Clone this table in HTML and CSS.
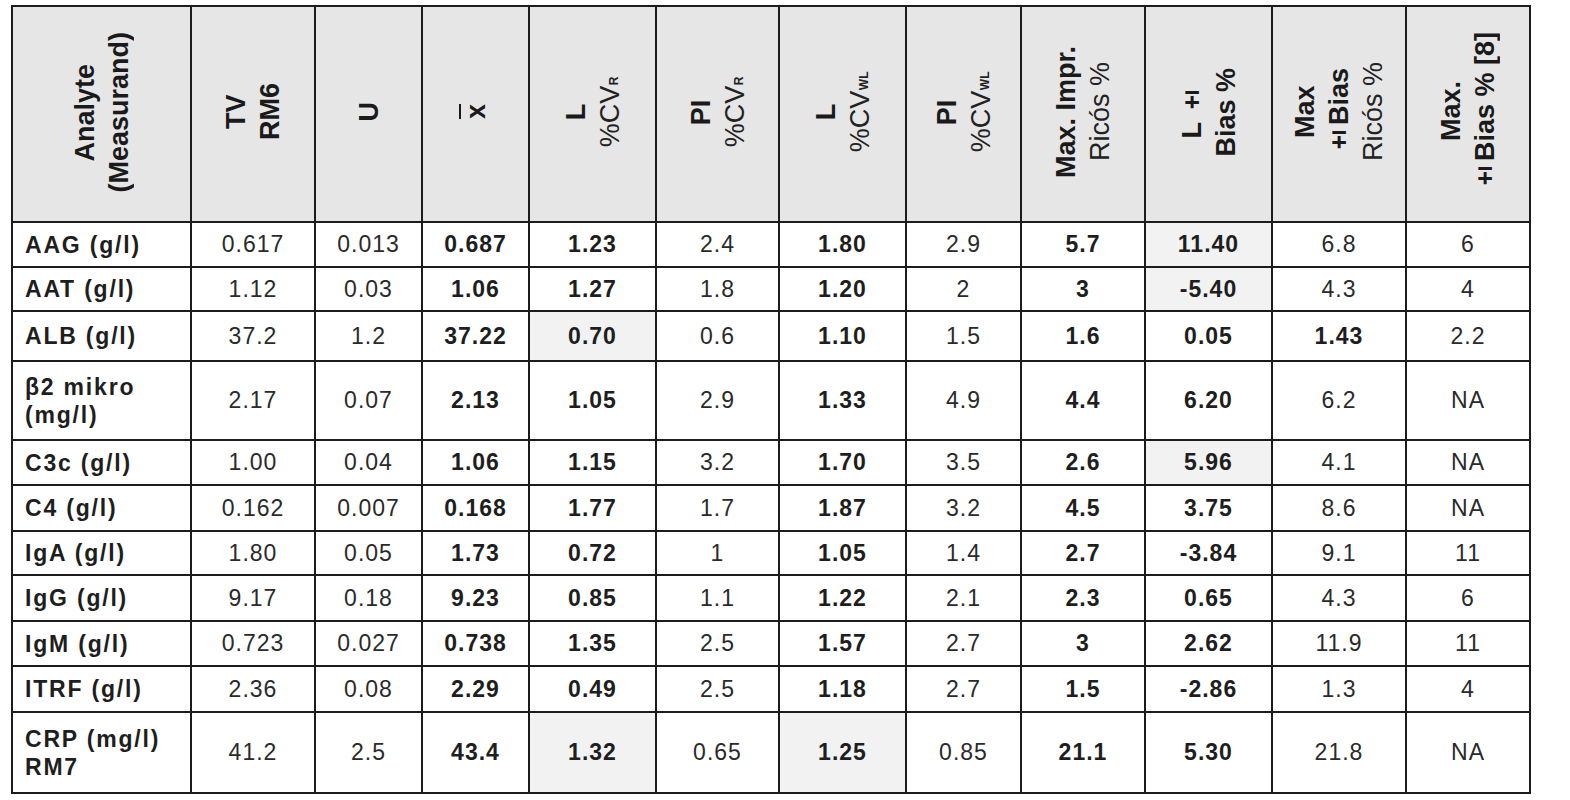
FILE: index.html
```html
<!DOCTYPE html>
<html>
<head>
<meta charset="utf-8">
<link rel="stylesheet" href="styles.css">
</head>
<body>
<table class="grid">
  <colgroup>
    <col class="c-name"><col class="c-tv"><col class="c-u"><col class="c-x"><col class="c-lr"><col class="c-pr"><col class="c-lw"><col class="c-pw"><col class="c-mi"><col class="c-lb"><col class="c-mb"><col class="c-m8">
  </colgroup>
  <thead>
    <tr class="r-head">
      <th><div class="rot"><b>Analyte</b><br><b>(Measurand)</b></div></th>
      <th><div class="rot"><b>TV</b><br><b>RM6</b></div></th>
      <th><div class="rot"><b>U</b></div></th>
      <th><div class="rot"><b class="bar">x</b></div></th>
      <th><div class="rot"><b>L</b><br><span class="cv">%CV<sub>R</sub></span></div></th>
      <th><div class="rot"><b>PI</b><br><span class="cv">%CV<sub>R</sub></span></div></th>
      <th><div class="rot"><b>L</b><br><span class="cv">%CV<sub>WL</sub></span></div></th>
      <th><div class="rot"><b>PI</b><br><span class="cv">%CV<sub>WL</sub></span></div></th>
      <th><div class="rot"><b>Max. Impr.</b><br><span class="cv">Ricós %</span></div></th>
      <th><div class="rot"><b>L ±</b><br><b>Bias %</b></div></th>
      <th><div class="rot"><b>Max</b><br><b>±Bias</b><br><span class="cv">Ricós %</span></div></th>
      <th><div class="rot"><b>Max.</b><br><b>±Bias % [8]</b></div></th>
    </tr>
  </thead>
  <tbody>
    <tr class="r45"><td class="name">AAG (g/l)</td><td>0.617</td><td>0.013</td><td class="b">0.687</td><td class="b">1.23</td><td>2.4</td><td class="b">1.80</td><td>2.9</td><td class="b">5.7</td><td class="b s">11.40</td><td>6.8</td><td>6</td></tr>
    <tr class="r44"><td class="name">AAT (g/l)</td><td>1.12</td><td>0.03</td><td class="b">1.06</td><td class="b">1.27</td><td>1.8</td><td class="b">1.20</td><td>2</td><td class="b">3</td><td class="b s">-5.40</td><td>4.3</td><td>4</td></tr>
    <tr class="r50"><td class="name">ALB (g/l)</td><td>37.2</td><td>1.2</td><td class="b">37.22</td><td class="b s">0.70</td><td>0.6</td><td class="b">1.10</td><td>1.5</td><td class="b">1.6</td><td class="b">0.05</td><td class="b">1.43</td><td>2.2</td></tr>
    <tr class="r79"><td class="name">β2 mikro<br>(mg/l)</td><td>2.17</td><td>0.07</td><td class="b">2.13</td><td class="b">1.05</td><td>2.9</td><td class="b">1.33</td><td>4.9</td><td class="b">4.4</td><td class="b">6.20</td><td>6.2</td><td>NA</td></tr>
    <tr class="r45"><td class="name">C3c (g/l)</td><td>1.00</td><td>0.04</td><td class="b">1.06</td><td class="b">1.15</td><td>3.2</td><td class="b">1.70</td><td>3.5</td><td class="b">2.6</td><td class="b s">5.96</td><td>4.1</td><td>NA</td></tr>
    <tr class="r46"><td class="name">C4 (g/l)</td><td>0.162</td><td>0.007</td><td class="b">0.168</td><td class="b">1.77</td><td>1.7</td><td class="b">1.87</td><td>3.2</td><td class="b">4.5</td><td class="b">3.75</td><td>8.6</td><td>NA</td></tr>
    <tr class="r44"><td class="name">IgA (g/l)</td><td>1.80</td><td>0.05</td><td class="b">1.73</td><td class="b">0.72</td><td>1</td><td class="b">1.05</td><td>1.4</td><td class="b">2.7</td><td class="b">-3.84</td><td>9.1</td><td>11</td></tr>
    <tr class="r46"><td class="name">IgG (g/l)</td><td>9.17</td><td>0.18</td><td class="b">9.23</td><td class="b">0.85</td><td>1.1</td><td class="b">1.22</td><td>2.1</td><td class="b">2.3</td><td class="b">0.65</td><td>4.3</td><td>6</td></tr>
    <tr class="r45"><td class="name">IgM (g/l)</td><td>0.723</td><td>0.027</td><td class="b">0.738</td><td class="b">1.35</td><td>2.5</td><td class="b">1.57</td><td>2.7</td><td class="b">3</td><td class="b">2.62</td><td>11.9</td><td>11</td></tr>
    <tr class="r46"><td class="name">ITRF (g/l)</td><td>2.36</td><td>0.08</td><td class="b">2.29</td><td class="b">0.49</td><td>2.5</td><td class="b">1.18</td><td>2.7</td><td class="b">1.5</td><td class="b">-2.86</td><td>1.3</td><td>4</td></tr>
    <tr class="r81"><td class="name">CRP (mg/l)<br>RM7</td><td>41.2</td><td>2.5</td><td class="b">43.4</td><td class="b s">1.32</td><td>0.65</td><td class="b s">1.25</td><td>0.85</td><td class="b">21.1</td><td class="b">5.30</td><td>21.8</td><td>NA</td></tr>
  </tbody>
</table>
</body>
</html>
```
FILE: styles.css
```css
html, body {
  margin: 0;
  padding: 0;
  background: #ffffff;
}
body {
  padding: 5px 0 0 11px;
  font-family: "Liberation Sans", Arial, sans-serif;
  color: #2a2a2a;
}
.grid {
  border-collapse: collapse;
  table-layout: fixed;
  width: 1520px;
  border: 2.5px solid #1c1c1c;
}
.c-name { width: 179px; }
.c-tv { width: 124px; }
.c-u { width: 107px; }
.c-x { width: 107px; }
.c-lr { width: 127px; }
.c-pr { width: 123px; }
.c-lw { width: 127px; }
.c-pw { width: 115px; }
.c-mi { width: 124px; }
.c-lb { width: 127px; }
.c-mb { width: 134px; }
.c-m8 { width: 124px; }

.grid th, .grid td {
  border: 2px solid #1c1c1c;
  padding: 0;
  text-align: center;
  vertical-align: middle;
}
.grid th {
  background: #e6e6e6;
  color: #1a1a1a;
  font-weight: normal;
}
.r-head { height: 216px; }
.r44 { height: 44px; }
.r45 { height: 45px; }
.r46 { height: 46px; }
.r50 { height: 50px; }
.r79 { height: 79px; }
.r81 { height: 81px; }

.rot {
  display: inline-block;
  writing-mode: vertical-rl;
  transform: rotate(180deg);
  text-align: center;
  font-size: 27px;
  line-height: 34px;
  white-space: nowrap;
}
.rot b { font-weight: bold; }
.rot .cv { font-weight: normal; color: #222222; }
.rot sub {
  font-size: 12px;
  font-weight: bold;
  vertical-align: -4px;
  line-height: 0;
  margin-left: 1px;
}
.bar {
  text-decoration: overline;
  text-decoration-thickness: 2px;
}

.grid td {
  font-size: 23px;
  letter-spacing: 1px;
  color: #2a2a2a;
}
.grid td.b {
  font-weight: bold;
  color: #1e1e1e;
}
.grid td.s {
  background: #f2f2f2;
}
.grid td.name {
  text-align: left;
  padding-left: 12px;
  font-weight: bold;
  color: #1e1e1e;
  letter-spacing: 1.8px;
  line-height: 28px;
}
```
